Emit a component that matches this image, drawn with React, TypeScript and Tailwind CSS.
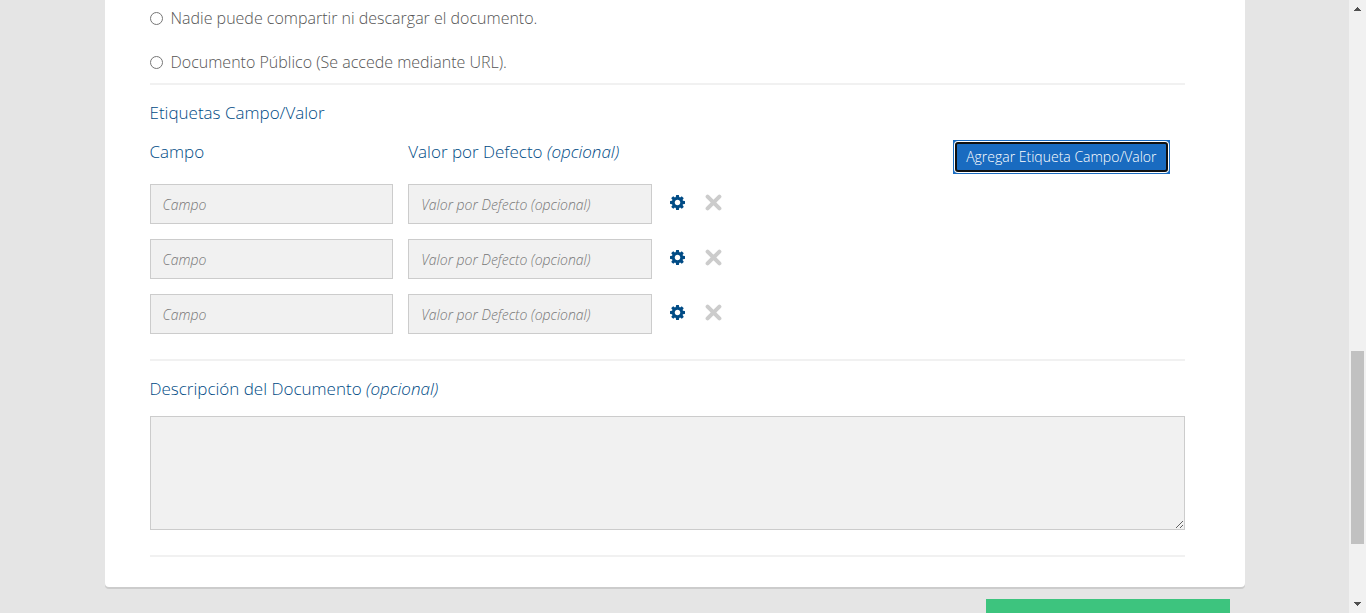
import { useState } from "react";

function CogIcon() {
  return (
    <svg viewBox="128 128 1536 1536" className="size-[15px]" fill="currentColor" aria-hidden="true">
      <path d="M1180 896q0-118-83-201t-201-83-201 83-83 201 83 201 201 83 201-83 83-201zm484-109v222q0 12-8 23t-20 13l-185 28q-19 54-39 91 35 50 107 138 10 12 10 25t-9 23q-27 37-99 108t-94 71q-12 0-26-9l-138-108q-44 23-91 38-16 136-29 186-7 28-36 28h-222q-14 0-24.5-8.5t-11.5-21.5l-28-184q-49-16-90-37l-141 107q-10 9-25 9-14 0-25-11-126-114-165-168-7-10-7-23 0-12 8-23 15-21 51-66.5t54-70.5q-27-50-41-99l-183-27q-13-2-21-12.5t-8-23.5v-222q0-12 8-23t19-13l186-28q14-46 39-92-40-57-107-138-10-12-10-24 0-10 9-23 26-36 98.5-107.5t94.5-71.5q13 0 26 10l138 107q44-23 91-38 16-136 29-186 7-28 36-28h222q14 0 24.5 8.5t11.5 21.500l28 184q49 16 90 37l142-107q9-9 24-9 13 0 25 10 129 119 165 170 7 8 7 22 0 12-8 23-15 21-51 66.5t-54 70.5q26 50 41 98l183 28q13 2 21 12.500t8 23.500z" />
    </svg>
  );
}

function CloseIcon() {
  return (
    <svg viewBox="0 0 17 17" className="size-[17px]" fill="none" stroke="currentColor" aria-hidden="true">
      <path d="M2.600 2.600 14.400 14.400M14.400 2.600 2.600 14.400" strokeWidth="4" strokeLinecap="round" />
    </svg>
  );
}

const options = [
  "Nadie puede compartir ni descargar el documento.",
  "Documento Público (Se accede mediante URL).",
];

const fieldClass =
  "block h-10 w-full border border-[#cccccc] bg-[#f1f1f1] px-3 text-sm font-light italic text-[#666666] outline-none placeholder:text-[#777777]";

function Divider() {
  return <hr className="border-0 border-t-2 border-[#f1f1f1]" />;
}

function Scrollbar() {
  return (
    <div className="flex w-[17px] shrink-0 flex-col bg-[#f1f1f1]" aria-hidden="true">
      <svg viewBox="0 0 17 17" className="size-[17px]" fill="#505050" shapeRendering="crispEdges">
        <path d="M8 7h1v1h1v1h1v1h1v1H5v-1h1V9h1V8h1z" />
      </svg>
      <div className="grow-[334] basis-0" />
      <div className="mx-[2px] grow-[193] basis-0 bg-[#c1c1c1]" />
      <div className="grow-[52] basis-0" />
      <svg viewBox="0 0 17 17" className="size-[17px]" fill="#505050" shapeRendering="crispEdges">
        <path d="M5 6h7v1h-1v1h-1v1H9v1H8V9H7V8H6V7H5z" />
      </svg>
    </div>
  );
}

export default function App() {
  const [access, setAccess] = useState("");
  const [rows, setRows] = useState([1, 2, 3]);

  return (
    <div className="flex h-screen overflow-hidden bg-[#e5e5e5] font-['Open_Sans','Noto_Sans',sans-serif] font-light">
      <main className="min-w-0 flex-1">
        <div className="mx-auto w-full max-w-[1140px]">
          <form className="rounded-b-[4px] bg-white pb-[30px] pl-[45px] pr-[60px] shadow-[0_2px_0_#cccccc]">
            <fieldset className="flex flex-col gap-5 pb-[9px] pt-[6px]">
              {options.map((option) => (
                <label key={option} className="flex h-6 items-center gap-2 text-base text-[#555555]">
                  <input
                    type="radio"
                    name="access"
                    checked={access === option}
                    onChange={() => setAccess(option)}
                    className="size-[13px] shrink-0"
                  />
                  {option}
                </label>
              ))}
            </fieldset>
            <Divider />

            <section className="pb-[25px] pt-4 text-[#004b85]">
              <h2 className="text-[17px] leading-6">Etiquetas Campo/Valor</h2>
              <div className="flex items-start pb-[10px] pt-[15px]">
                <h3 className="w-1/4 text-[17px] leading-6">Campo</h3>
                <h3 className="w-1/4 text-[17px] leading-6">
                  Valor por Defecto <em>(opcional)</em>
                </h3>
                <div className="flex w-1/2 justify-end pr-[15px]">
                  <button
                    type="button"
                    onClick={() => setRows([...rows, Math.max(0, ...rows) + 1])}
                    className="bg-[#196bc0] p-px text-sm font-light text-white"
                  >
                    <span className="block rounded-[4px] bg-white p-px">
                      <span className="block rounded-[3px] border-2 border-[#101010] bg-[#196bc0] px-[9px] py-px leading-6">
                        Agregar Etiqueta Campo/Valor
                      </span>
                    </span>
                  </button>
                </div>
              </div>
              <div className="flex flex-col gap-[15px]">
                {rows.map((row) => (
                  <div key={row} className="flex items-center">
                    <div className="w-1/4 pr-[15px]">
                      <input type="text" aria-label="Campo" placeholder="Campo" className={fieldClass} />
                    </div>
                    <div className="w-1/4 pr-[15px]">
                      <input
                        type="text"
                        aria-label="Valor por Defecto (opcional)"
                        placeholder="Valor por Defecto (opcional)"
                        className={fieldClass}
                      />
                    </div>
                    <div className="flex items-center gap-5 pb-[3px] pl-[3px]">
                      <button type="button" aria-label="Configurar">
                        <CogIcon />
                      </button>
                      <button
                        type="button"
                        aria-label="Eliminar"
                        onClick={() => setRows(rows.filter((r) => r !== row))}
                        className="text-[#cccccc]"
                      >
                        <CloseIcon />
                      </button>
                    </div>
                  </div>
                ))}
              </div>
            </section>
            <Divider />

            <section className="pb-[25px] pt-4">
              <label htmlFor="description" className="block text-[17px] leading-6 text-[#004b85]">
                Descripción del Documento <em>(opcional)</em>
              </label>
              <textarea
                id="description"
                className="mt-[15px] block h-[114px] w-full resize-y border border-[#cccccc] bg-[#f1f1f1] p-3 text-sm outline-none"
              />
            </section>
            <Divider />
          </form>
          <div className="flex justify-end pr-[15px] pt-3">
            <button type="button" aria-label="Guardar" className="h-10 w-[244px] bg-[#3dc47e]" />
          </div>
        </div>
      </main>
      <Scrollbar />
    </div>
  );
}
